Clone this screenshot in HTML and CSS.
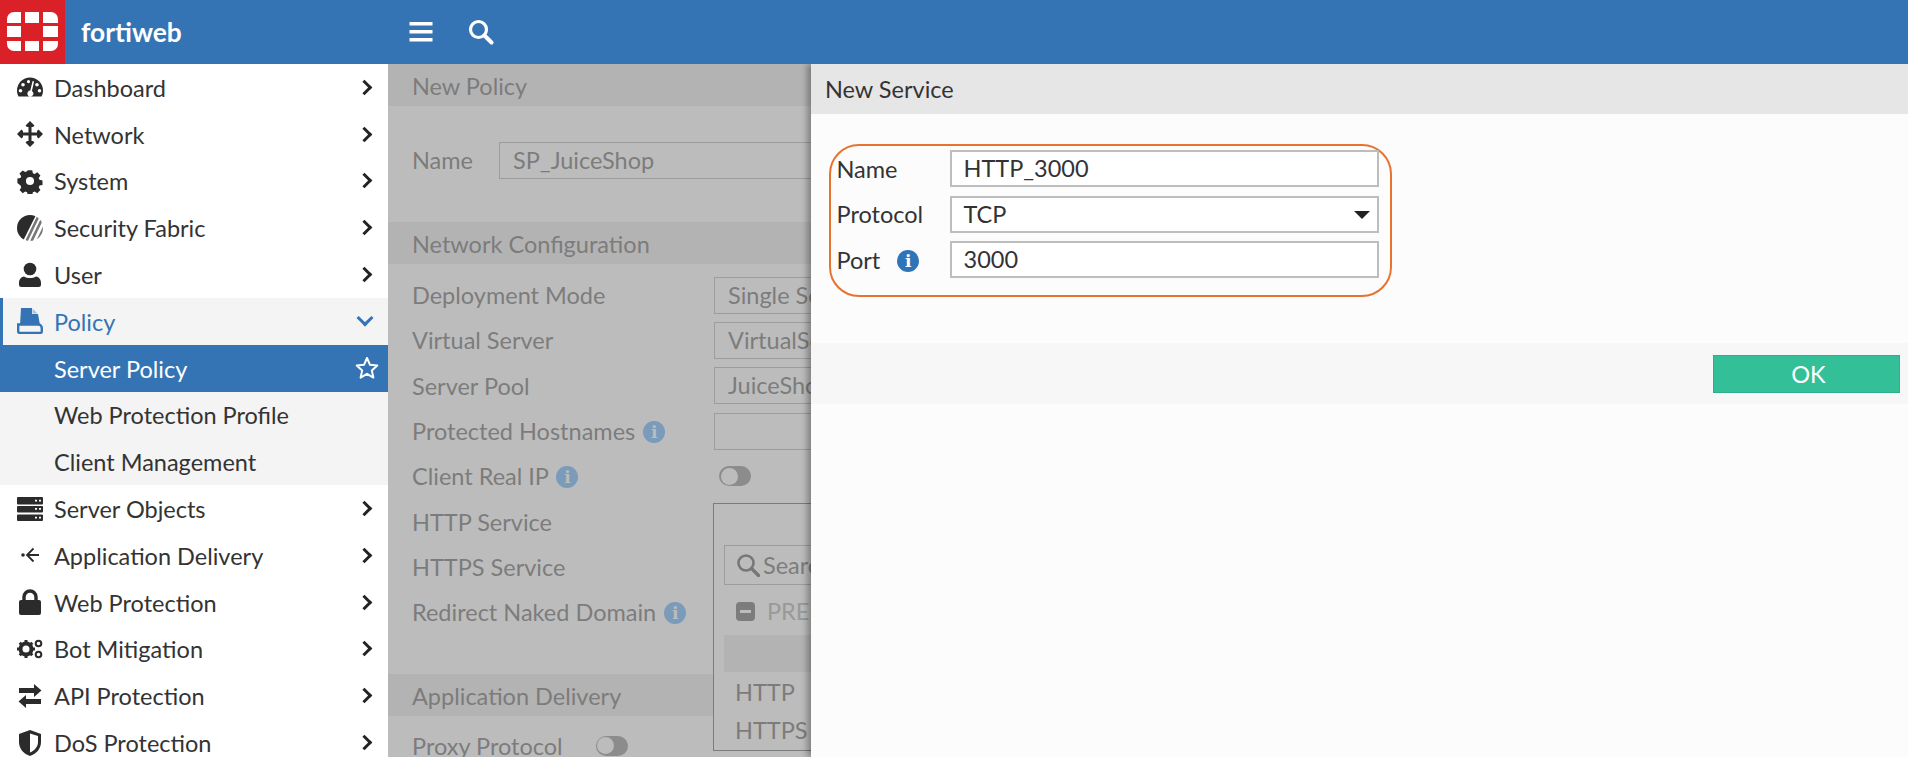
FILE: index.html
```html
<!DOCTYPE html>
<html lang="en">
<head>
<meta charset="UTF-8">
<title>FortiWeb - New Service</title>
<link rel="stylesheet" href="styles.css">
</head>
<body>

<header class="topbar">
    <div class="logo">
        <svg width="51" height="39" viewBox="0 0 51 39">
            <path fill="#fff" d="M0 7a7 7 0 0 1 7-7h7v11H0zM18 0h14v11H18zM36 0h8a7 7 0 0 1 7 7v4H36zM0 14h14v11H0zM36 14h15v11H36zM0 29h14v10H7a7 7 0 0 1-7-7zM18 29h14v10H18zM36 29h15v3a7 7 0 0 1-7 7h-8z"/>
        </svg>
    </div>
    <div class="brand">fortiweb</div>
    <div class="topbar-tools">
        <svg class="tool" width="24" height="24" viewBox="0 0 24 24"><path fill="#fff" d="M0.500 2h23v3.600H0.500zM0.500 10h23v3.600H0.500zM0.500 18h23v3.600H0.500z"/></svg>
        <svg class="tool" width="26" height="26" viewBox="0 0 26 26"><circle cx="10.500" cy="10.500" r="8" fill="none" stroke="#fff" stroke-width="3.200"/><path d="M16.500 16.500l7 7" stroke="#fff" stroke-width="4" stroke-linecap="round"/></svg>
    </div>
</header>

<div class="main">

<nav class="sidebar">
    <a class="nav-item"><svg class="nav-icon" viewBox="0 0 26 26"><path fill="#2b2b2b" fill-rule="evenodd" d="M13 3.500A13 13 0 0 0 0 16.500c0 2.200.5 4.200 1.500 6h23c1-1.800 1.500-3.800 1.500-6a13 13 0 0 0-13-13zM11.500 6a1.600 1.600 0 1 1 0 3.200 1.600 1.600 0 0 1 0-3.200zM6 9a1.800 1.800 0 1 1 0 3.600A1.800 1.800 0 0 1 6 9zM3.500 15a1.800 1.800 0 1 1 0 3.600 1.800 1.800 0 0 1 0-3.600zM20 9a1.800 1.800 0 1 1 0 3.600A1.800 1.800 0 0 1 20 9zM22.500 15a1.800 1.800 0 1 1 0 3.600 1.800 1.800 0 0 1 0-3.600zM15.600 7l1.500.5-2.200 9.500a3 3 0 1 1-1.600-.4z"/></svg><span class="nav-label">Dashboard</span><span class="chev"></span></a>
    <a class="nav-item"><svg class="nav-icon" viewBox="0 0 26 26"><path fill="#2b2b2b" d="M13 0l4.500 4.500-1.500 1.500H14.500v5.500H20V10l1.500-1.500L26 13l-4.500 4.500L20 16v-1.500h-5.500V20H16l1.500 1.500L13 26l-4.500-4.500L10 20h1.500v-5.500H6V16l-1.500 1.500L0 13l4.500-4.500L6 10v1.500h5.500V6H10L8.500 4.500z"/></svg><span class="nav-label">Network</span><span class="chev"></span></a>
    <a class="nav-item"><svg class="nav-icon" viewBox="0 0 26 26"><path fill="#2b2b2b" fill-rule="evenodd" d="M10.500 1h5l.7 3.400 2 .8 2.900-1.900 3.500 3.500-1.900 2.900.8 2 3.400.7v5l-3.400.7-.8 2 1.900 2.900-3.500 3.500-2.900-1.900-2 .8-.7 3.400h-5l-.7-3.400-2-.8-2.900 1.900-3.500-3.500 1.900-2.900-.8-2L-1 15.300v-5l3.400-.7.800-2-1.900-2.900 3.500-3.500 2.900 1.900 2-.8zM13 8.500a4.500 4.500 0 1 0 0 9 4.500 4.500 0 0 0 0-9z" transform="translate(1.300 1.300) scale(.9)"/></svg><span class="nav-label">System</span><span class="chev"></span></a>
    <a class="nav-item"><svg class="nav-icon" viewBox="0 0 26 26"><defs><clipPath id="fabric"><circle cx="13" cy="13" r="13"/></clipPath></defs><g clip-path="url(#fabric)"><path fill="#2b2b2b" d="M0 0h19L6 26H0z"/><path stroke="#777" stroke-width="2.600" d="M22 0L9.500 26M27 0L14.500 26M32 2L19.500 28"/></g></svg><span class="nav-label">Security Fabric</span><span class="chev"></span></a>
    <a class="nav-item"><svg class="nav-icon" viewBox="0 0 26 26"><circle cx="13" cy="7" r="6.300" fill="#2b2b2b"/><path fill="#2b2b2b" d="M7 14.500c3.500 2 8.500 2 12 0 3 .5 5 3 5 6.500v1.500a2.500 2.500 0 0 1-2.500 2.500h-17A2.500 2.500 0 0 1 2 22.500V21c0-3.500 2-6 5-6.500z"/></svg><span class="nav-label">User</span><span class="chev"></span></a>
    <a class="nav-item nav-open"><svg class="nav-icon" viewBox="0 0 26 26"><path fill="#3474b5" d="M4 0h11v6h6l2 11H3z"/><path fill="#a9c4df" d="M15.500 0.500l5 5h-5z"/><path fill="none" stroke="#3474b5" stroke-width="2.400" d="M4 16.500H1.200v7a1.500 1.500 0 0 0 1.500 1.500h20.600a1.500 1.500 0 0 0 1.500-1.500v-3.500a3.500 3.500 0 0 0-3.500-3.500H4z"/></svg><span class="nav-label">Policy</span><span class="chev chev-down"></span></a>
    <a class="nav-item nav-sub nav-current"><span class="nav-label">Server Policy</span><svg class="star" width="24" height="24" viewBox="0 0 24 24"><path fill="none" stroke="#fff" stroke-width="2" stroke-linejoin="round" d="M12 2l3 6.800 7.300.7-5.500 4.900 1.600 7.200L12 17.800l-6.400 3.800 1.600-7.200L1.700 9.500 9 8.800z"/></svg></a>
    <a class="nav-item nav-sub"><span class="nav-label">Web Protection Profile</span></a>
    <a class="nav-item nav-sub"><span class="nav-label">Client Management</span></a>
    <a class="nav-item"><svg class="nav-icon" viewBox="0 0 26 26"><path fill="#2b2b2b" fill-rule="evenodd" d="M1 1h24a1 1 0 0 1 1 1v5.500a1 1 0 0 1-1 1H1a1 1 0 0 1-1-1V2a1 1 0 0 1 1-1zM1 10h24a1 1 0 0 1 1 1v4.500a1 1 0 0 1-1 1H1a1 1 0 0 1-1-1V11a1 1 0 0 1 1-1zM1 18.500h24a1 1 0 0 1 1 1V24a1 1 0 0 1-1 1H1a1 1 0 0 1-1-1v-4.500a1 1 0 0 1 1-1zM18 3.700v1.800h2V3.700zM22 3.700v1.800h2V3.700zM18 12v1.800h2V12zM22 12v1.800h2V12zM18 20.800v1.800h2v-1.800zM22 20.800v1.800h2v-1.800z"/></svg><span class="nav-label">Server Objects</span><span class="chev"></span></a>
    <a class="nav-item"><svg class="nav-icon" viewBox="0 0 26 26"><circle cx="6" cy="13" r="1.800" fill="#2b2b2b"/><path fill="none" stroke="#2b2b2b" stroke-width="1.800" d="M10 13h12M16.500 6.500L10 13l6.500 6.500"/></svg><span class="nav-label">Application Delivery</span><span class="chev"></span></a>
    <a class="nav-item"><svg class="nav-icon" viewBox="0 0 26 26"><path fill="none" stroke="#2b2b2b" stroke-width="3.400" d="M7 12V8a6 6 0 0 1 12 0v4"/><rect x="2" y="11" width="22" height="15" rx="2" fill="#2b2b2b"/></svg><span class="nav-label">Web Protection</span><span class="chev"></span></a>
    <a class="nav-item"><svg class="nav-icon" viewBox="0 0 26 26"><circle cx="9" cy="13" r="5.500" fill="none" stroke="#2b2b2b" stroke-width="4"/><path stroke="#2b2b2b" stroke-width="3" d="M9 4v3M9 19v3M0 13h3M15 13h3M2.700 6.700l2 2M13.300 17.300l2 2M2.700 19.300l2-2M13.300 8.700l2-2"/><circle cx="21.500" cy="7.500" r="2.800" fill="none" stroke="#2b2b2b" stroke-width="2"/><circle cx="21.500" cy="18.500" r="2.800" fill="none" stroke="#2b2b2b" stroke-width="2"/></svg><span class="nav-label">Bot Mitigation</span><span class="chev"></span></a>
    <a class="nav-item"><svg class="nav-icon" viewBox="0 0 26 26"><path fill="#2b2b2b" d="M2 5h15V1l7.500 6.500L17 14v-4H2zM24 16H9v-4l-7.500 6.500L9 25v-4h15z"/></svg><span class="nav-label">API Protection</span><span class="chev"></span></a>
    <a class="nav-item"><svg class="nav-icon" viewBox="0 0 26 26"><path fill="#2b2b2b" fill-rule="evenodd" d="M13 0l11 4v8c0 7-5 12-11 14C7 24 2 19 2 12V4zM13 3.400V22.600c4.500-2 8-5.800 8-10.600V6z"/></svg><span class="nav-label">DoS Protection</span><span class="chev"></span></a>
</nav>

<section class="policy-panel">
    <div class="section-head">New Policy</div>
    <div class="name-row">
        <span class="field-label">Name</span>
        <div class="fake-input name-input">SP_JuiceShop</div>
    </div>

    <div class="section-head net-head">Network Configuration</div>
    <div class="field-row"><span class="field-label">Deployment Mode</span><div class="fake-input">Single Server/Server Balance</div></div>
    <div class="field-row"><span class="field-label">Virtual Server</span><div class="fake-input">VirtualServer</div></div>
    <div class="field-row"><span class="field-label">Server Pool</span><div class="fake-input">JuiceShop</div></div>
    <div class="field-row"><span class="field-label">Protected Hostnames <i class="info info-dim">i</i></span><div class="fake-input"></div></div>
    <div class="field-row"><span class="field-label">Client Real IP <i class="info info-dim">i</i></span><span class="toggle"></span></div>
    <div class="field-row"><span class="field-label">HTTP Service</span></div>
    <div class="field-row"><span class="field-label">HTTPS Service</span></div>
    <div class="field-row"><span class="field-label">Redirect Naked Domain <i class="info info-dim">i</i></span></div>

    <div class="section-head app-head">Application Delivery</div>
    <div class="proxy-row"><span class="field-label">Proxy Protocol</span><span class="toggle"></span></div>

    <div class="dropdown">
        <div class="drop-search">
            <svg width="24" height="24" viewBox="0 0 24 24"><circle cx="10" cy="10" r="7.500" fill="none" stroke="#777" stroke-width="2.600"/><path d="M15.500 15.500l7 7" stroke="#777" stroke-width="3.400" stroke-linecap="round"/></svg>
            <span>Search</span>
        </div>
        <div class="drop-group"><span class="minus"></span><span>PREDEFINED</span></div>
        <div class="drop-hl"></div>
        <div class="drop-item">HTTP</div>
        <div class="drop-item">HTTPS</div>
    </div>
</section>

<section class="modal">
    <div class="modal-head">New Service</div>
    <div class="modal-body">
        <div class="service-form">
            <div class="service-row">
                <span class="service-label">Name</span>
                <div class="service-input">HTTP_3000</div>
            </div>
            <div class="service-row">
                <span class="service-label">Protocol</span>
                <div class="service-input">TCP<span class="caret"></span></div>
            </div>
            <div class="service-row">
                <span class="service-label">Port<i class="info info-port">i</i></span>
                <div class="service-input">3000</div>
            </div>
        </div>
    </div>
    <div class="modal-foot">
        <button class="ok-btn">OK</button>
    </div>
</section>

</div>

</body>
</html>
```

FILE: styles.css
```css
* {
    box-sizing: border-box;
}
html, body {
    height: 100%;
}
body {
    margin: 0;
    overflow: hidden;
    font-family: Lato, "Liberation Sans", sans-serif;
    font-size: 23.5px;
    color: #333;
    background-color: #fff;
}

/* top bar */
.topbar {
    display: flex;
    align-items: center;
    height: 64px;
    background-color: #3474b5;
    color: #fff;
}
.logo {
    display: flex;
    align-items: center;
    justify-content: center;
    width: 65px;
    height: 64px;
    padding-bottom: 1px;
    background-color: #da2128;
}
.brand {
    width: 323px;
    padding-left: 16px;
    font-size: 26.3px;
    font-weight: 700;
}
.topbar-tools {
    display: flex;
    align-items: center;
    gap: 35px;
    padding-left: 21px;
}

.main {
    display: flex;
    height: 693px;
    overflow: hidden;
}

/* sidebar */
.sidebar {
    flex: none;
    width: 388px;
    background-color: #fff;
}
.nav-item {
    display: flex;
    align-items: center;
    height: 46.8px;
    padding: 0 17px 0 17px;
    color: #333;
}
.nav-icon {
    flex: none;
    width: 26px;
    height: 26px;
    margin-right: 11px;
}
.nav-label {
    flex: 1;
    padding-top: 1px;
}
.chev {
    width: 11px;
    height: 11px;
    border-top: 3.5px solid #222;
    border-right: 3.5px solid #222;
    transform: translateX(-1px) rotate(45deg);
}
.chev-down {
    width: 12px;
    height: 12px;
    border-color: #3474b5;
    transform: translateY(-3px) rotate(135deg);
}
.nav-open {
    padding-left: 14px;
    border-left: 3px solid #3474b5;
    background-color: #f4f4f4;
    color: #3474b5;
}
.nav-sub {
    padding-left: 54px;
    background-color: #f4f4f4;
}
.nav-current {
    padding-right: 9px;
    background-color: #3474b5;
    color: #fff;
}

/* dimmed policy form behind the slide-in */
.policy-panel {
    position: relative;
    flex: none;
    width: 423px;
    overflow: hidden;
    background-color: #bcbcbc;
    color: #7c7c7c;
}
.section-head {
    height: 42px;
    line-height: 44px;
    padding-left: 24px;
    background-color: #b3b3b3;
    color: #7c7c7c;
}
.name-row {
    display: flex;
    align-items: flex-start;
    height: 116px;
    padding: 36px 0 0 24px;
}
.name-row .field-label {
    flex: none;
    width: 87px;
    line-height: 37px;
}
.field-row {
    display: flex;
    align-items: center;
    height: 45.3px;
    padding-left: 24px;
}
.net-head + .field-row {
    margin-top: 8.500px;
}
.field-row .field-label {
    flex: none;
    width: 302px;
}
.fake-input {
    flex: none;
    width: 300px;
    height: 37px;
    line-height: 34px;
    padding-left: 13px;
    border: 1px solid #9c9c9c;
    white-space: nowrap;
}
.name-input {
    width: 400px;
}
.toggle {
    position: relative;
    display: inline-block;
    flex: none;
    width: 32px;
    height: 20px;
    margin-left: 5px;
    border-radius: 10px;
    background-color: #8c8c8c;
}
.toggle::before {
    content: "";
    position: absolute;
    left: 1.500px;
    top: 1.500px;
    width: 17px;
    height: 17px;
    border-radius: 50%;
    background-color: #bcbcbc;
}
.info {
    display: inline-block;
    width: 22px;
    height: 22px;
    margin-left: 2px;
    border-radius: 50%;
    background-color: #2f74b8;
    color: #fff;
    font-family: "DejaVu Serif", serif;
    font-size: 17px;
    font-style: normal;
    font-weight: 700;
    line-height: 22px;
    text-align: center;
    vertical-align: 2px;
}
.info-dim {
    background-color: #7a9bb9;
    color: #bcbcbc;
}
.info-port {
    margin-left: 17px;
}
.app-head {
    margin-top: 39px;
}
.proxy-row {
    display: flex;
    align-items: center;
    height: 66px;
    padding: 0 0 6px 24px;
}
.proxy-row .toggle {
    margin-left: 33px;
}
.dropdown {
    position: absolute;
    left: 325px;
    top: 439px;
    width: 300px;
    height: 248px;
    padding: 41px 0 0 10px;
    border: 1px solid #7c7c7c;
    background-color: #bcbcbc;
}
.drop-search {
    display: flex;
    align-items: center;
    gap: 3px;
    height: 40px;
    padding-left: 11px;
    border: 1px solid #9c9c9c;
}
.drop-group {
    display: flex;
    align-items: center;
    gap: 12px;
    height: 50px;
    padding: 2px 0 0 12px;
    color: #999;
}
.minus {
    position: relative;
    width: 19px;
    height: 19px;
    border-radius: 4px;
    background-color: #7c7c7c;
}
.minus::before {
    content: "";
    position: absolute;
    left: 4px;
    top: 8px;
    width: 11px;
    height: 3px;
    background-color: #bcbcbc;
}
.drop-hl {
    height: 37px;
    background-color: #b3b3b3;
}
.drop-item {
    height: 38px;
    line-height: 40px;
    margin-left: 11px;
}

/* slide-in */
.modal {
    position: relative;
    flex: 1;
    background-color: #fcfcfc;
    box-shadow: -4px 0 6px rgba(0, 0, 0, 0.3);
}
.modal-head {
    height: 50px;
    line-height: 50px;
    padding-left: 14px;
    background-color: #e6e6e6;
}
.modal-body {
    height: 229px;
    padding: 30px 0 0 18px;
}
.service-form {
    width: 563px;
    height: 153px;
    padding: 4px 11.500px 0 5.500px;
    border: 2.500px solid #e8732f;
    border-radius: 30px;
}
.service-row {
    display: flex;
    align-items: center;
    height: 37px;
    margin-bottom: 8.500px;
}
.service-label {
    flex: none;
    width: 113px;
}
.service-input {
    position: relative;
    flex: 1;
    height: 37px;
    line-height: 33px;
    padding-left: 12px;
    border: 2px solid #bdbdbd;
    background-color: #fff;
}
.caret {
    position: absolute;
    right: 7px;
    top: 13px;
    border-left: 8px solid transparent;
    border-right: 8px solid transparent;
    border-top: 8px solid #222;
}
.modal-foot {
    display: flex;
    justify-content: flex-end;
    align-items: center;
    height: 61px;
    padding-right: 8px;
    background-color: #f7f7f7;
}
.ok-btn {
    width: 187px;
    height: 38px;
    padding: 0 0 0 4px;
    border: 1px solid #2eae8a;
    background-color: #33bf97;
    color: #fff;
    font-family: Lato, "Liberation Sans", sans-serif;
    font-size: 23.5px;
}
```
